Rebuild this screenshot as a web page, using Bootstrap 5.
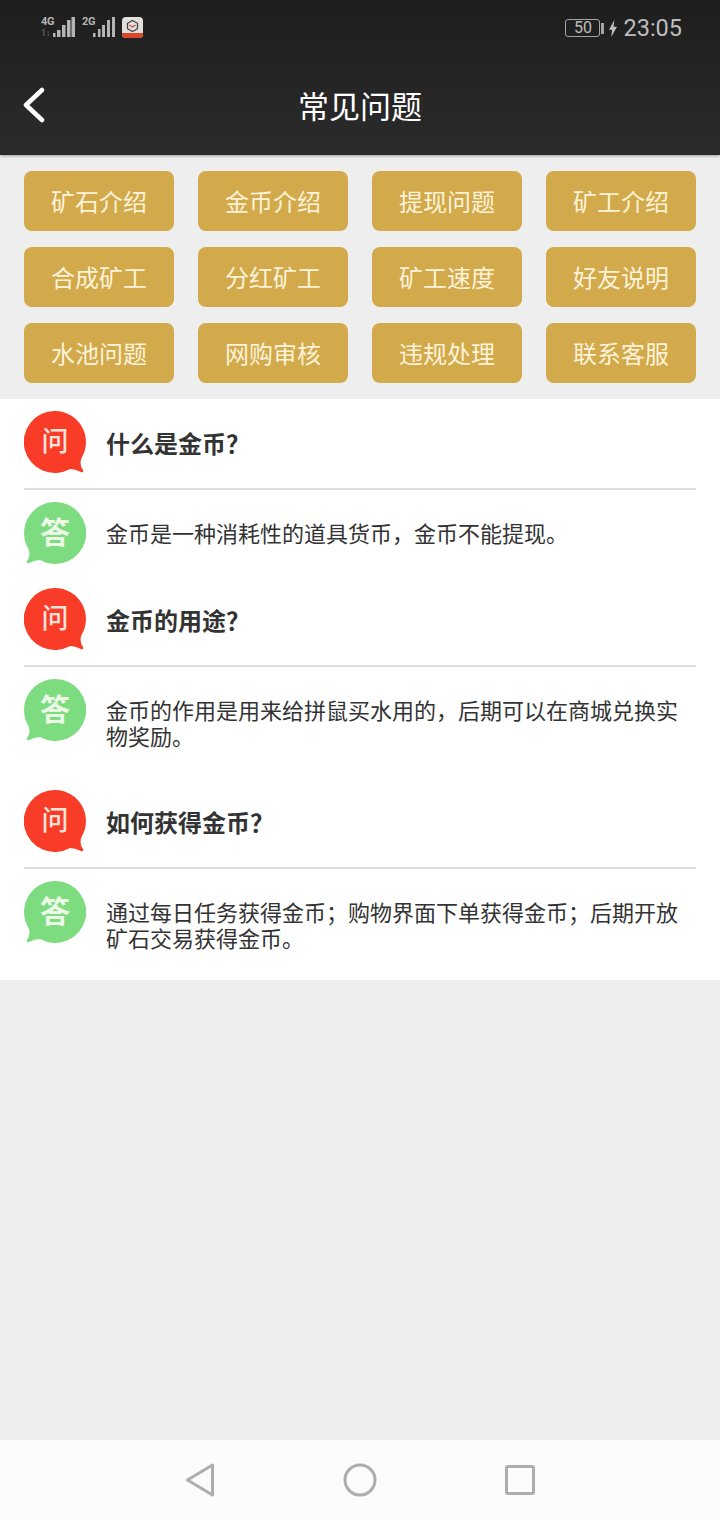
<!DOCTYPE html>
<html lang="zh-CN">
<head>
<meta charset="utf-8">
<title>常见问题</title>
<link href="https://cdn.jsdelivr.net/npm/bootstrap@5.3.0/dist/css/bootstrap.min.css" rel="stylesheet">
<style>
html,body{margin:0;height:1520px;overflow:hidden}
body{width:720px;background:#eeeeee;font-family:"Noto Sans CJK SC","Noto Sans",sans-serif;color:#333}
.page-shell{height:1520px}
.top-head{height:155px;background:linear-gradient(#1e1e1e,#2b2b2b);box-shadow:0 1px 3px rgba(0,0,0,.35);position:relative}
.status-strip{height:55px;padding:13px 38px 0 41px;color:#b9b9b9}
.status-left{padding-top:4px}
.net-tag{font:700 11px/10px "Roboto",sans-serif;color:#b5b5b5;width:12px;letter-spacing:-.3px}
.net-tag-two{margin-left:7px;width:11px}
.net-sub{font:400 9px/9px "Roboto",sans-serif;color:#777;margin-top:2px}
.app-mark{margin-left:7px}
.clock-text{font:400 23.500px/30px "Roboto",sans-serif;color:#bdbdbd;margin-left:6px}
.batt-box{width:35px;height:18px;border:1.500px solid #a5a5a5;border-radius:3px;font:400 16px/15px "Roboto",sans-serif;color:#bdbdbd;text-align:center}
.batt-cap{width:3px;height:11px;background:#a5a5a5;margin:0 5px 0 1px}
.title-text{font-size:31px;line-height:100px;color:#fff;font-weight:400}
.back-mark{position:absolute;left:22px;top:87px}
.tag-grid{display:grid;grid-template-columns:repeat(4,150px);column-gap:24px;row-gap:16px;padding:16px 24px}
.tag-btn{height:60px;background:#d2a94b;border-radius:8px;color:#fdf3d8;font-size:24px;line-height:59px;text-align:center}
.faq-panel{background:#fff;padding:0 24px}
.q-row{padding:12px 0 13px;border-bottom:2px solid #dedede}
.a-row{padding-top:12px}
.bubble{width:62px;height:64px;flex:none;display:block;margin-right:20px}
.a-row .bubble{margin-bottom:10px}
.q-text{font-size:24px;font-weight:700;line-height:34px;color:#333}
.a-text{font-size:22px;line-height:26px;padding:17px 14px 30px 0;color:#333}
.bubble text{font-family:"Noto Sans CJK SC",sans-serif;text-anchor:middle}
.spacer-fill{flex:1}
.sys-nav{height:80px;background:#fcfcfc}
</style>
</head>
<body>
<div class="page-shell d-flex flex-column">
  <header class="top-head">
    <div class="status-strip d-flex justify-content-between">
      <div class="status-left d-flex align-items-start">
        <div><div class="net-tag">4G</div><div class="net-sub">1↓</div></div>
        <svg width="22" height="21" viewBox="0 0 22 21"><g fill="#b5b5b5"><rect x="0" y="16" width="2.500" height="4"/><rect x="4" y="13" width="3.500" height="7"/><rect x="9" y="8" width="3.500" height="12"/><rect x="14" y="3" width="3.500" height="17"/><rect x="18.500" y="0" width="3.500" height="20"/></g></svg>
        <div class="net-tag net-tag-two">2G</div>
        <svg width="22" height="21" viewBox="0 0 22 21"><g fill="#b5b5b5"><rect x="0" y="16" width="2.500" height="4"/><rect x="5" y="12" width="2.500" height="8"/><rect x="9" y="8" width="3" height="12"/><rect x="14" y="3" width="3" height="17"/><rect x="19" y="0" width="3" height="20"/></g></svg>
        <svg class="app-mark" width="21" height="22" viewBox="0 0 21 22"><rect width="21" height="21" rx="4" fill="#e2dfdc"/><path d="M0 16h21v1a4 4 0 0 1-4 4H4a4 4 0 0 1-4-4z" fill="#d9472b"/><path d="M10.500 3.500l5 2.800v5.400l-5 2.800-5-2.800V6.300z" fill="none" stroke="#444" stroke-width="1.300"/><path d="M7.500 8l3 2 3-2" fill="none" stroke="#c9503a" stroke-width="1.200"/></svg>
      </div>
      <div class="d-flex align-items-center" style="height:30px">
        <div class="batt-box">50</div>
        <div class="batt-cap"></div>
        <svg width="8" height="17" viewBox="0 0 9 19" preserveAspectRatio="none"><path d="M6 0L0 11h3.500L2.500 19 9 7.500H5.200z" fill="#bdbdbd"/></svg>
        <div class="clock-text">23:05</div>
      </div>
    </div>
    <div class="text-center"><div class="title-text">常见问题</div></div>
    <svg class="back-mark" width="24" height="36" viewBox="0 0 24 36"><path d="M20 3L4 18l16 15" fill="none" stroke="#fff" stroke-width="4.500" stroke-linecap="round" stroke-linejoin="round"/></svg>
  </header>

  <div class="tag-grid">
    <div class="tag-btn">矿石介绍</div><div class="tag-btn">金币介绍</div><div class="tag-btn">提现问题</div><div class="tag-btn">矿工介绍</div>
    <div class="tag-btn">合成矿工</div><div class="tag-btn">分红矿工</div><div class="tag-btn">矿工速度</div><div class="tag-btn">好友说明</div>
    <div class="tag-btn">水池问题</div><div class="tag-btn">网购审核</div><div class="tag-btn">违规处理</div><div class="tag-btn">联系客服</div>
  </div>

  <section class="faq-panel">
    <div class="q-row d-flex align-items-center">
      <svg class="bubble" viewBox="0 0 62 64"><path d="M31 0A31 31 0 0 1 57.500 47Q55 54 59 59Q60 62 57 61Q51 58 46 58A31 31 0 1 1 31 0z" fill="#f93c27"/><text x="31" y="40" font-size="27" font-weight="500" fill="#fbe3dc">问</text></svg>
      <div class="q-text">什么是金币？</div>
    </div>
    <div class="a-row d-flex align-items-start">
      <svg class="bubble" viewBox="0 0 62 64"><path d="M31 0A31 31 0 0 0 4.500 47Q7 54 3 59Q2 62 5 61Q11 58 16 58A31 31 0 1 0 31 0z" fill="#7ddc80"/><text x="31" y="41" font-size="30" font-weight="700" fill="#ecf9e6">答</text></svg>
      <div class="a-text">金币是一种消耗性的道具货币，金币不能提现。</div>
    </div>

    <div class="q-row d-flex align-items-center">
      <svg class="bubble" viewBox="0 0 62 64"><path d="M31 0A31 31 0 0 1 57.500 47Q55 54 59 59Q60 62 57 61Q51 58 46 58A31 31 0 1 1 31 0z" fill="#f93c27"/><text x="31" y="40" font-size="27" font-weight="500" fill="#fbe3dc">问</text></svg>
      <div class="q-text">金币的用途？</div>
    </div>
    <div class="a-row d-flex align-items-start">
      <svg class="bubble" viewBox="0 0 62 64"><path d="M31 0A31 31 0 0 0 4.500 47Q7 54 3 59Q2 62 5 61Q11 58 16 58A31 31 0 1 0 31 0z" fill="#7ddc80"/><text x="31" y="41" font-size="30" font-weight="700" fill="#ecf9e6">答</text></svg>
      <div class="a-text">金币的作用是用来给拼鼠买水用的，后期可以在商城兑换实物奖励。</div>
    </div>

    <div class="q-row d-flex align-items-center">
      <svg class="bubble" viewBox="0 0 62 64"><path d="M31 0A31 31 0 0 1 57.500 47Q55 54 59 59Q60 62 57 61Q51 58 46 58A31 31 0 1 1 31 0z" fill="#f93c27"/><text x="31" y="40" font-size="27" font-weight="500" fill="#fbe3dc">问</text></svg>
      <div class="q-text">如何获得金币？</div>
    </div>
    <div class="a-row d-flex align-items-start">
      <svg class="bubble" viewBox="0 0 62 64"><path d="M31 0A31 31 0 0 0 4.500 47Q7 54 3 59Q2 62 5 61Q11 58 16 58A31 31 0 1 0 31 0z" fill="#7ddc80"/><text x="31" y="41" font-size="30" font-weight="700" fill="#ecf9e6">答</text></svg>
      <div class="a-text">通过每日任务获得金币；购物界面下单获得金币；后期开放矿石交易获得金币。</div>
    </div>
  </section>

  <div class="spacer-fill"></div>

  <nav class="sys-nav">
    <svg width="720" height="80" viewBox="0 0 720 80" class="d-block">
      <g fill="none" stroke="#adadad" stroke-width="3" stroke-linejoin="round">
        <path d="M212.500 25v30L187.500 40z"/>
        <circle cx="360" cy="40" r="15"/>
        <rect x="506.500" y="26.500" width="27" height="27" rx="1.500"/>
      </g>
    </svg>
  </nav>
</div>
</body>
</html>
